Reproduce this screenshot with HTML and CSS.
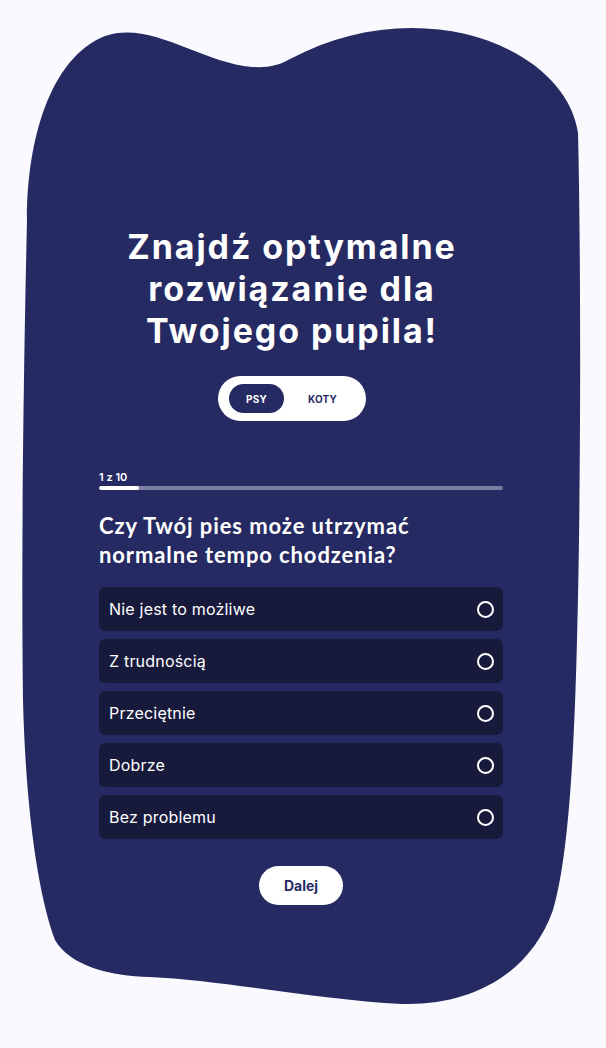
FILE: index.html
```html
<!DOCTYPE html>
<html lang="pl">
<head>
<meta charset="utf-8">
<title>Quiz</title>
<link rel="stylesheet" href="styles.css">
</head>
<body>
<div class="stage">
  <svg class="blob" viewBox="0 0 606 1048" width="606" height="1048" aria-hidden="true">
    <path d="M 27 220 C 27 140, 50 58, 105 36 C 150 20, 200 62, 252 67 C 268 68, 280 65, 290 59 C 330 38, 370 28, 412 28 C 500 28, 570 75, 578 133 C 581 250, 581 500, 577 640 C 574 760, 568 860, 553 910 C 530 975, 470 1006, 402 1004 C 320 1000, 220 980, 150 977 C 110 976, 70 966, 55 940 C 40 900, 26 820, 23 700 C 21 550, 24 350, 27 220 Z" fill="#262a62"/>
  </svg>
  <main class="content">
    <section class="hero">
      <h1 class="title">Znajdź optymalne<br>rozwiązanie dla<br>Twojego pupila!</h1>
      <div class="switch">
        <span class="switch-opt active">PSY</span>
        <span class="switch-opt">KOTY</span>
      </div>
    </section>
    <section class="quiz">
      <div class="progress-label">1 z 10</div>
      <div class="progress"><div class="progress-fill" style="width:10%"></div></div>
      <h2 class="question">Czy Twój pies może utrzymać<br>normalne tempo chodzenia?</h2>
      <ul class="options">
        <li class="option"><span>Nie jest to możliwe</span><span class="radio"></span></li>
        <li class="option"><span>Z trudnością</span><span class="radio"></span></li>
        <li class="option"><span>Przeciętnie</span><span class="radio"></span></li>
        <li class="option"><span>Dobrze</span><span class="radio"></span></li>
        <li class="option"><span>Bez problemu</span><span class="radio"></span></li>
      </ul>
      <div class="actions"><button class="next">Dalej</button></div>
    </section>
  </main>
</div>
</body>
</html>
```
FILE: styles.css
```css
* { box-sizing: border-box; }
html, body { margin: 0; padding: 0; }
body {
  background: #f9f9fe;
  font-family: "Inter", "Liberation Sans", sans-serif;
  color: #fff;
}
.stage {
  position: relative;
  width: 606px;
  height: 1048px;
  overflow: hidden;
}
.blob {
  position: absolute;
  top: 0;
  left: 0;
  z-index: 0;
}
.content {
  position: relative;
  z-index: 1;
  padding: 226px 103px 0 99px;
}
.hero {
  display: flex;
  flex-direction: column;
  align-items: center;
  padding-right: 18px;
}
.title {
  margin: 0;
  font-size: 34px;
  line-height: 42px;
  font-weight: 700;
  text-align: center;
  letter-spacing: 1.9px;
}
.switch {
  margin-top: 24px;
  width: 148px;
  height: 45px;
  background: #fff;
  border-radius: 23px;
  padding: 0 11px;
  display: flex;
  align-items: center;
}
.switch-opt {
  font-size: 10px;
  font-weight: 700;
  color: #262a62;
  display: flex;
  align-items: center;
  justify-content: center;
  height: 29px;
  flex: 1;
  padding-left: 6px;
  letter-spacing: 0.2px;
}
.switch-opt.active {
  flex: 0 0 55px;
  padding-left: 0;
  background: #262a62;
  color: #fff;
  border-radius: 15px;
}
.quiz {
  margin-top: 49px;
}
.progress-label {
  font-size: 11px;
  line-height: 14px;
  font-weight: 600;
  margin-bottom: 2px;
}
.progress {
  height: 4px;
  border-radius: 2px;
  background: rgba(255, 255, 255, 0.4);
  overflow: hidden;
}
.progress-fill {
  height: 100%;
  background: #fff;
  border-radius: 2px;
}
.question {
  margin: 21px 0 0;
  font-family: "Lato", "Liberation Sans", sans-serif;
  font-size: 22px;
  line-height: 29px;
  font-weight: 700;
  letter-spacing: 0.9px;
}
.options {
  list-style: none;
  margin: 18px 0 0;
  padding: 0;
  display: flex;
  flex-direction: column;
  gap: 8px;
}
.option {
  height: 44px;
  background: #181a3c;
  border-radius: 6px;
  padding: 0 9px 0 10px;
  display: flex;
  align-items: center;
  justify-content: space-between;
  font-size: 16px;
  font-weight: 400;
  letter-spacing: 0.2px;
}
.radio {
  width: 17px;
  height: 17px;
  border: 2px solid #fff;
  border-radius: 50%;
}
.actions {
  margin-top: 27px;
  display: flex;
  justify-content: center;
}
.next {
  width: 84px;
  height: 39px;
  border: 0;
  border-radius: 20px;
  background: #fff;
  color: #262a62;
  font-family: "Inter", "Liberation Sans", sans-serif;
  font-size: 14px;
  font-weight: 700;
}
```
